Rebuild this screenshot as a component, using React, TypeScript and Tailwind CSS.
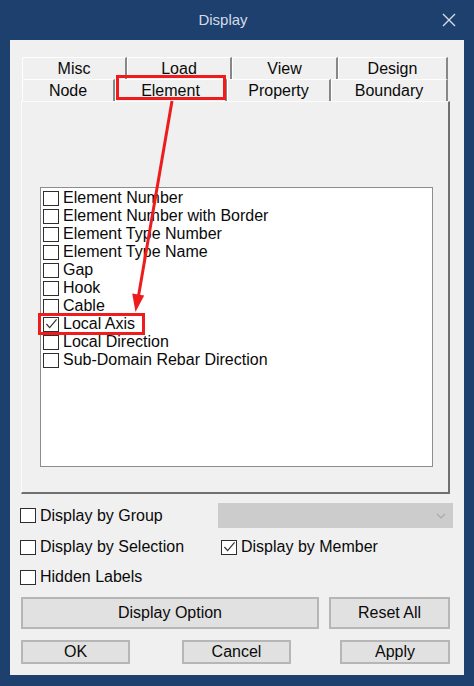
const listItems = [
  "Element Number",
  "Element Number with Border",
  "Element Type Number",
  "Element Type Name",
  "Gap",
  "Hook",
  "Cable",
  "Local Axis",
  "Local Direction",
  "Sub-Domain Rebar Direction",
];

const backTabs = [
  { label: "Misc", w: "w-[105px]" },
  { label: "Load", w: "w-[105px]" },
  { label: "View", w: "w-[106px]" },
  { label: "Design", w: "w-[110px]" },
];

const frontTabs = [
  { label: "Node", w: "w-[93px]" },
  { label: "Element", w: "w-[112px]" },
  { label: "Property", w: "w-[104px]" },
  { label: "Boundary", w: "w-[117px]" },
];

function CheckBox({ checked }: { checked?: boolean }) {
  return (
    <span className="flex h-[15px] w-[16px] shrink-0 items-center justify-center border border-[#2e2e2e] bg-white">
      {checked && (
        <svg viewBox="0 0 14 13" className="h-[12px] w-[13px]">
          <polyline
            points="1.5,6.5 5,10.5 12.5,1.5"
            fill="none"
            stroke="#333"
            strokeWidth="1.3"
          />
        </svg>
      )}
    </span>
  );
}

function Tab({ label, w }: { label: string; w: string }) {
  return (
    <div
      className={`${w} flex h-[22px] items-center justify-center rounded-tl-[2px] border-t border-l border-r-2 border-t-white border-l-white border-r-[#878787] text-[16px] leading-none`}
    >
      {label}
    </div>
  );
}

function Button({ label, w }: { label: string; w: string }) {
  return (
    <div
      className={`${w} flex h-full items-center justify-center border-2 border-[#b6b6b6] bg-[#e1e1e1] text-[16px]`}
    >
      {label}
    </div>
  );
}

export default function App() {
  return (
    <div className="relative flex h-[686px] w-[474px] flex-col bg-[#1e406f] font-['Liberation_Sans',Arial,sans-serif] text-[#0a0a0a]">
      {/* title bar */}
      <div className="flex h-[40px] shrink-0 items-center">
        <div className="flex-1 pl-[4px] text-center text-[15px] text-[#d3dbe7]">
          Display
        </div>
        <svg viewBox="0 0 14 14" className="mr-[18px] h-[14px] w-[14px]">
          <path d="M1 1 L13 13 M13 1 L1 13" stroke="#d3dbe7" strokeWidth="1.4" />
        </svg>
      </div>

      {/* client area */}
      <div className="mx-[10px] flex h-[635px] flex-col bg-[#f0f0f0] pt-[17px]">
        <div className="ml-[12px] flex flex-col">
          <div className="flex">
            {backTabs.map((t) => (
              <Tab key={t.label} label={t.label} w={t.w} />
            ))}
          </div>
          <div className="flex">
            {frontTabs.map((t) => (
              <Tab key={t.label} label={t.label} w={t.w} />
            ))}
          </div>
        </div>

        <div className="ml-[11px] h-[393px] w-[429px] border-t border-l border-r-2 border-b-2 border-t-[#fbfbfb] border-l-[#fbfbfb] border-r-[#707070] border-b-[#707070]">
          <div className="mt-[85px] ml-[18px] h-[280px] w-[393px] border border-[#8d8d8d] bg-white pt-[1px] pl-[2px]">
            {listItems.map((item) => (
              <div key={item} className="flex h-[18px] items-center gap-[4px] text-[16px]">
                <CheckBox checked={item === "Local Axis"} />
                <span className="leading-none">{item}</span>
              </div>
            ))}
          </div>
        </div>

        <div className="mt-[9px] flex h-[25px] items-center pl-[10px] text-[16px]">
          <div className="flex w-[198px] items-center gap-[4px]">
            <CheckBox />
            <span>Display by Group</span>
          </div>
          <div className="flex h-full w-[235px] items-center justify-end bg-[#cccccc] pr-[7px]">
            <svg viewBox="0 0 10 6" className="h-[6px] w-[10px]">
              <polyline points="1,1 5,5 9,1" fill="none" stroke="#a9a9a9" strokeWidth="1.2" />
            </svg>
          </div>
        </div>

        <div className="mt-[7px] flex h-[24px] items-center pl-[10px] text-[16px]">
          <div className="flex w-[201px] items-center gap-[4px]">
            <CheckBox />
            <span>Display by Selection</span>
          </div>
          <div className="flex items-center gap-[4px]">
            <CheckBox checked />
            <span>Display by Member</span>
          </div>
        </div>

        <div className="mt-[6px] flex h-[24px] items-center gap-[4px] pl-[10px] text-[16px]">
          <CheckBox />
          <span>Hidden Labels</span>
        </div>

        <div className="mt-[8px] ml-[11px] flex h-[32px] gap-[10px]">
          <Button label="Display Option" w="w-[298px]" />
          <Button label="Reset All" w="w-[121px]" />
        </div>

        <div className="mt-[11px] ml-[11px] flex h-[24px]">
          <Button label="OK" w="w-[109px]" />
          <div className="ml-[52px] h-full">
            <Button label="Cancel" w="w-[109px]" />
          </div>
          <div className="ml-[49px] h-full">
            <Button label="Apply" w="w-[110px]" />
          </div>
        </div>
      </div>

      {/* red annotations */}
      <div className="pointer-events-none absolute top-[75px] left-[116px] h-[25px] w-[110px] border-[3px] border-[#ee1c1c]" />
      <div className="pointer-events-none absolute top-[313px] left-[38px] h-[22px] w-[107px] border-[3px] border-[#ee1c1c]" />
      <svg className="pointer-events-none absolute top-0 left-0 h-[686px] w-[474px]" viewBox="0 0 474 686">
        <line x1="172" y1="101" x2="138.5" y2="296" stroke="#ee1c1c" strokeWidth="3" />
        <polygon points="135.5,312 144.2,295.5 132.2,293.5" fill="#ee1c1c" />
      </svg>
    </div>
  );
}
